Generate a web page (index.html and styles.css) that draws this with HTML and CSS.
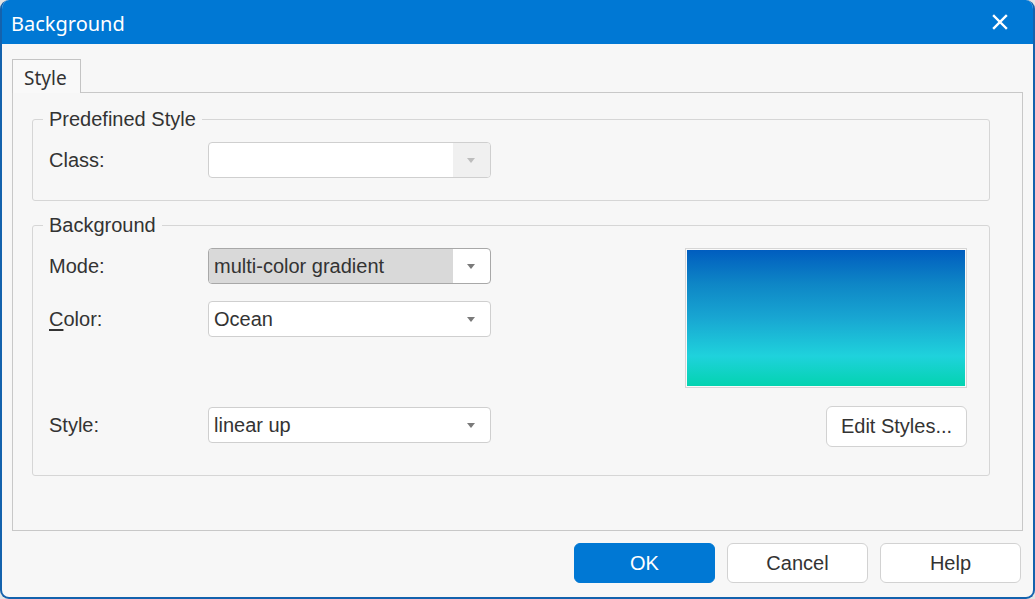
FILE: index.html
```html
<!DOCTYPE html>
<html>
<head>
<meta charset="utf-8">
<title>Background</title>
<link rel="stylesheet" href="styles.css">
</head>
<body>
<div class="window">
  <div class="titlebar">
    <span class="title">Background</span>
    <svg class="close" width="16" height="16" viewBox="0 0 16 16"><path d="M2 2 L14 14 M14 2 L2 14" stroke="#fff" stroke-width="2.4" stroke-linecap="square"/></svg>
  </div>
  <div class="content">
    <div class="tabs"><div class="tab">Style</div></div>
    <div class="panel">
      <fieldset class="group group-predef">
        <legend>Predefined Style</legend>
        <div class="form">
          <label class="lbl">Class:</label>
          <div class="combo disabled"><span class="val"></span><span class="arrow"></span></div>
        </div>
      </fieldset>
      <fieldset class="group group-bg">
        <legend>Background</legend>
        <div class="bg-row">
          <div class="form rows4">
            <label class="lbl">Mode:</label>
            <div class="combo focused"><span class="val sel">multi-color gradient</span><span class="arrow"></span></div>
            <label class="lbl"><u>C</u>olor:</label>
            <div class="combo"><span class="val">Ocean</span><span class="arrow"></span></div>
            <div class="empty"></div><div class="empty"></div>
            <label class="lbl">Style:</label>
            <div class="combo"><span class="val">linear up</span><span class="arrow"></span></div>
          </div>
          <div class="side">
            <div class="preview"><div class="grad"></div></div>
            <button class="btn edit">Edit Styles...</button>
          </div>
        </div>
      </fieldset>
    </div>
    <div class="buttons">
      <button class="btn primary">OK</button>
      <button class="btn">Cancel</button>
      <button class="btn">Help</button>
    </div>
  </div>
</div>
</body>
</html>
```
FILE: styles.css
```css
html, body {
  margin: 0;
  padding: 0;
  background: #e4e4e4;
}
body {
  width: 1035px;
  height: 599px;
  overflow: hidden;
}
.window {
  box-sizing: border-box;
  width: 1035px;
  height: 599px;
  border: 2px solid #1462ad;
  border-top: 0;
  border-radius: 9px;
  background: #f7f7f7;
  overflow: hidden;
  display: flex;
  flex-direction: column;
  font-family: "Liberation Sans", Arial, sans-serif;
  color: #333;
}
.titlebar {
  height: 44px;
  flex: none;
  background: #0078d4;
  display: flex;
  align-items: center;
  padding: 0 25px 0 9px;
}
.title {
  font-family: "Noto Sans", "Open Sans", sans-serif;
  font-size: 20px;
  color: #fff;
  flex: 1;
  line-height: 1;
  padding-top: 3px;
}
.close {
  display: block;
}
.content {
  flex: 1;
  display: flex;
  flex-direction: column;
  padding: 15px 10px 14px 10px;
}
.tabs {
  display: flex;
  height: 33px;
  flex: none;
  position: relative;
  z-index: 1;
}
.tab {
  box-sizing: border-box;
  height: 34px;
  width: 69px;
  border: 1px solid #c4c4c4;
  border-bottom: 0;
  background: #f9f9f9;
  font-family: "Noto Sans", "Open Sans", sans-serif;
  font-size: 19px;
  color: #333;
  padding: 5px 0 0 11px;
  line-height: 26px;
}
.panel {
  flex: 1;
  box-sizing: border-box;
  border: 1px solid #c8c8c8;
  background: #f7f7f7;
  padding: 15px 32px 0 19px;
}
.group {
  margin: 0;
  border: 1px solid #d6d6d6;
  border-radius: 3px;
  padding: 12px 22px 22px 16px;
  min-width: 0;
}
.group legend {
  font-size: 20px;
  line-height: 22px;
  padding: 0 6px;
  margin-left: -6px;
  color: #333;
}
.group-bg {
  margin-top: 13px;
  padding-bottom: 28px;
}
.form {
  display: grid;
  grid-template-columns: 159px 283px;
  grid-auto-rows: 36px;
  row-gap: 17px;
  align-items: center;
}
.lbl {
  font-size: 20px;
  color: #333;
}
.lbl u {
  text-decoration: underline;
  text-underline-offset: 3px;
}
.combo {
  box-sizing: border-box;
  height: 36px;
  border: 1px solid #cfcfcf;
  border-radius: 4px;
  background: #fff;
  display: flex;
  align-items: stretch;
  overflow: hidden;
}
.combo.focused {
  border-color: #a8a8a8;
}
.combo .val {
  flex: 1;
  font-size: 20px;
  line-height: 35px;
  padding-left: 5px;
  color: #333;
  white-space: nowrap;
}
.combo .val.sel {
  background: #d9d9d9;
}
.combo .arrow {
  width: 37px;
  flex: none;
  position: relative;
}
.combo .arrow::after {
  content: "";
  position: absolute;
  left: 14px;
  top: 15px;
  border-left: 4.5px solid transparent;
  border-right: 4.5px solid transparent;
  border-top: 5px solid #7a7a7a;
}
.combo.disabled .arrow {
  background: #f0f0f0;
}
.combo.disabled .arrow::after {
  border-top-color: #bdbdbd;
}
.bg-row {
  display: flex;
  justify-content: space-between;
  align-items: flex-start;
}
.side {
  display: flex;
  flex-direction: column;
  align-items: flex-end;
  gap: 18px;
}
.preview {
  box-sizing: border-box;
  width: 282px;
  height: 140px;
  border: 1px solid #d6d6d6;
  padding: 1px;
  background: #fafafa;
}
.grad {
  width: 100%;
  height: 100%;
  background: linear-gradient(to bottom, #005dbf 0%, #0e86c6 25%, #18a6d2 50%, #1fd2dc 78%, #03d3b0 100%);
}
.btn {
  box-sizing: border-box;
  width: 141px;
  height: 40px;
  border: 1px solid #d2d2d2;
  border-radius: 6px;
  background: #fff;
  font-family: "Liberation Sans", Arial, sans-serif;
  font-size: 20px;
  color: #333;
  padding: 0;
  margin: 0;
}
.btn.edit {
  width: 141px;
  height: 41px;
}
.buttons {
  flex: none;
  display: flex;
  justify-content: flex-end;
  gap: 12px;
  margin-top: 12px;
  padding-right: 2px;
}
.btn.primary {
  background: #0078d4;
  border-color: #0078d4;
  color: #fff;
}
```
